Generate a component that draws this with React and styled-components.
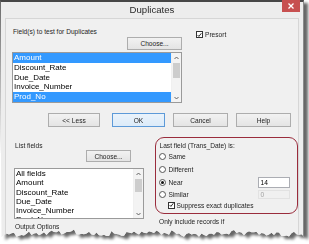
import React from "react";
import styled, { createGlobalStyle, css } from "styled-components";

const GlobalStyle = createGlobalStyle`
  html, body { margin: 0; padding: 0; background: #ffffff; }
  body { width: 309px; height: 244px; overflow: hidden; font-family: "Liberation Sans", Arial, sans-serif; }
  * { box-sizing: border-box; }
`;

const tearPoints = (() => {
  const pts = ["0px 0px", "304px 0px"];
  for (let x = 304; x >= 0; x -= 2.5) {
    const y =
      233.5 +
      1.4 * Math.sin(x * 0.83) +
      1.1 * Math.sin(x * 0.31 + 1.3) +
      1.2 * Math.sin(x * 0.07 + 0.4) +
      (Math.sin(x * 12.9898) * 43758.5453 % 1) * 1.1;
    pts.push(`${x.toFixed(1)}px ${y.toFixed(1)}px`);
  }
  return pts.join(", ");
})();

const Shadow = styled.div`
  width: 309px;
  height: 244px;
  filter: drop-shadow(4px 3px 1.5px rgba(0, 0, 0, 0.6));
`;

const Window = styled.div`
  width: 304px;
  height: 241px;
  background: #ededed;
  border-top: 2px solid #474747;
  border-left: 1px solid #6a6a6a;
  border-right: 1px solid #8a8a8a;
  padding: 0 4px;
  clip-path: polygon(${tearPoints});
  display: flex;
  flex-direction: column;
`;

const TitleBar = styled.div`
  position: relative;
  height: 16px;
  display: flex;
  align-items: center;
  justify-content: center;
  font-size: 9.6px;
  color: #2b2b2b;
  padding-bottom: 1px;
`;

const CloseButton = styled.div`
  position: absolute;
  top: -2px;
  right: -1px;
  width: 18px;
  height: 12px;
  background: #c75050;
  display: flex;
  align-items: center;
  justify-content: center;
`;

const Client = styled.div`
  flex: 1;
  background: #f0f0f0;
  border: 1px solid #d6d6d6;
  display: flex;
  flex-direction: column;
`;

const Label = styled.div`
  font-size: 6.6px;
  line-height: 9px;
  height: 9px;
  color: #1e1e1e;
  white-space: nowrap;
  ${(p) => p.$indent && css`padding-left: ${p.$indent}px;`}
  ${(p) => p.$mt !== undefined && css`margin-top: ${p.$mt}px;`}
  ${(p) => p.$h !== undefined && css`height: ${p.$h}px; line-height: ${p.$h}px;`}
`;

const TopSection = styled.div`
  display: flex;
  padding: 8px 0 0 6px;
`;

const Column = styled.div`
  width: ${(p) => p.$w}px;
  display: flex;
  flex-direction: column;
  ${(p) => p.$ml && css`margin-left: ${p.$ml}px;`}
`;

const Button = styled.div`
  width: ${(p) => p.$w}px;
  height: ${(p) => p.$h || 14}px;
  border: 1px solid ${(p) => (p.$default ? "#5d9ad8" : "#adadad")};
  background: ${(p) => (p.$default ? "linear-gradient(#eaf3fb, #dcebf9)" : "linear-gradient(#f2f2f2, #e4e4e4)")};
  font-size: 6.6px;
  color: #1e1e1e;
  display: flex;
  align-items: center;
  justify-content: center;
  white-space: nowrap;
  ${(p) => p.$alignEnd && css`align-self: flex-end;`}
  ${(p) => p.$mt !== undefined && css`margin-top: ${p.$mt}px;`}
  ${(p) => p.$mr !== undefined && css`margin-right: ${p.$mr}px;`}
`;

const ListBox = styled.div`
  height: 51px;
  margin-top: ${(p) => p.$mt}px;
  background: #ffffff;
  border: 1px solid #9a9a9a;
  display: flex;
  overflow: hidden;
`;

const Items = styled.div`
  flex: 1;
  display: flex;
  flex-direction: column;
  overflow: hidden;
`;

const Item = styled.div`
  height: ${(p) => p.$h}px;
  line-height: ${(p) => p.$h}px;
  flex: none;
  font-size: 8px;
  padding-left: 1px;
  white-space: nowrap;
  color: ${(p) => (p.$sel ? "#ffffff" : "#000000")};
  background: ${(p) => (p.$sel ? "#3399ff" : "transparent")};
`;

const ScrollBar = styled.div`
  width: 10px;
  background: #f3f3f3;
  border-left: 1px solid #f0f0f0;
  display: flex;
  flex-direction: column;
`;

const Arrow = styled.div`
  height: 9px;
  display: flex;
  align-items: center;
  justify-content: center;
`;

const Track = styled.div`
  flex: 1;
  padding: 1px 1px 0;
`;

const Thumb = styled.div`
  height: ${(p) => p.$h}px;
  background: #cdcdcd;
`;

const CheckRow = styled.div`
  display: flex;
  align-items: center;
  gap: 2px;
  font-size: 6.6px;
  color: #1e1e1e;
  white-space: nowrap;
  ${(p) => p.$ml && css`margin-left: ${p.$ml}px;`}
  ${(p) => p.$mt && css`margin-top: ${p.$mt}px;`}
  ${(p) => p.$h && css`height: ${p.$h}px;`}
  align-self: flex-start;
`;

const CheckBox = styled.div`
  width: 7px;
  height: 7px;
  border: 1px solid #333333;
  background: #ffffff;
  display: flex;
  align-items: center;
  justify-content: center;
`;

const ButtonRow = styled.div`
  display: flex;
  margin-top: 10px;
  padding-left: 42px;
`;

const Gap = styled.div`
  width: ${(p) => p.$w}px;
  flex: none;
`;

const BottomSection = styled.div`
  display: flex;
  margin-top: 10px;
  padding-left: 8px;
`;

const RedGroup = styled.div`
  height: 77px;
  border: 1.5px solid #9a2c3c;
  border-radius: 9px;
  padding: 3.5px 7.5px 0 2.5px;
  display: flex;
  flex-direction: column;
`;

const OptionRow = styled.div`
  height: ${(p) => p.$h}px;
  display: flex;
  align-items: center;
  font-size: 6.6px;
  color: #1e1e1e;
`;

const Radio = styled.div`
  width: 7px;
  height: 7px;
  border-radius: 50%;
  border: 1px solid #555555;
  background: #ffffff;
  display: flex;
  align-items: center;
  justify-content: center;
  margin-right: 3px;
  &::after {
    content: "";
    width: 3px;
    height: 3px;
    border-radius: 50%;
    background: ${(p) => (p.$on ? "#111111" : "transparent")};
  }
`;

const TextBox = styled.div`
  margin-left: auto;
  width: 32px;
  height: ${(p) => p.$h}px;
  border: 1px solid ${(p) => (p.$disabled ? "#e2e2e2" : "#abadb3")};
  background: ${(p) => (p.$disabled ? "#f0f0f0" : "#ffffff")};
  color: ${(p) => (p.$disabled ? "#a0a0a0" : "#000000")};
  font-size: 6.6px;
  display: flex;
  align-items: center;
  padding-left: 2px;
`;

const Check = () => (
  <svg width="6" height="6" viewBox="0 0 6 6">
    <path d="M0.8 3.1 L2.3 4.7 L5.2 0.9" fill="none" stroke="#111" strokeWidth="1.1" />
  </svg>
);

const Chevron = ({ up }) => (
  <svg width="5" height="4" viewBox="0 0 5 4">
    <path d={up ? "M0.5 3 L2.5 1 L4.5 3" : "M0.5 1 L2.5 3 L4.5 1"} fill="none" stroke="#555" strokeWidth="0.9" />
  </svg>
);

const List = ({ items, selected = [], h, thumb, mt }) => (
  <ListBox $mt={mt}>
    <Items>
      {items.map((t) => (
        <Item key={t} $h={h} $sel={selected.includes(t)}>
          {t}
        </Item>
      ))}
    </Items>
    <ScrollBar>
      <Arrow>
        <Chevron up />
      </Arrow>
      <Track>
        <Thumb $h={thumb} />
      </Track>
      <Arrow>
        <Chevron />
      </Arrow>
    </ScrollBar>
  </ListBox>
);

export default function App() {
  return (
    <>
      <GlobalStyle />
      <Shadow>
        <Window>
          <TitleBar>
            Duplicates
            <CloseButton>
              <svg width="6" height="6" viewBox="0 0 6 6">
                <path d="M0.5 0.5 L5.5 5.5 M5.5 0.5 L0.5 5.5" stroke="#fff" strokeWidth="1.3" />
              </svg>
            </CloseButton>
          </TitleBar>
          <Client>
            <TopSection>
              <Column $w={170}>
                <Label $indent={1}>Field(s) to test for Duplicates</Label>
                <Button $w={55} $h={13} $alignEnd $mt={1}>
                  Choose...
                </Button>
                <List
                  mt={2}
                  h={9.8}
                  thumb={15}
                  items={["Amount", "Discount_Rate", "Due_Date", "Invoice_Number", "Prod_No"]}
                  selected={["Amount", "Prod_No"]}
                />
              </Column>
              <CheckRow $ml={14} $mt={4}>
                <CheckBox>
                  <Check />
                </CheckBox>
                Presort
              </CheckRow>
            </TopSection>
            <ButtonRow>
              <Button $w={52}>&lt;&lt; Less</Button>
              <Gap $w={12} />
              <Button $w={53} $default>
                OK
              </Button>
              <Gap $w={8} />
              <Button $w={55}>Cancel</Button>
              <Gap $w={8} />
              <Button $w={55}>Help</Button>
            </ButtonRow>
            <BottomSection>
              <Column $w={130}>
                <Label $indent={1} $mt={4}>
                  List fields
                </Label>
                <Button $w={45} $h={12} $alignEnd $mr={13}>
                  Choose...
                </Button>
                <List
                  mt={6}
                  h={9.3}
                  thumb={13}
                  items={["All fields", "Amount", "Discount_Rate", "Due_Date", "Invoice_Number", "Prod_No"]}
                />
                <Label $indent={1} $mt={3}>
                  Output Options
                </Label>
              </Column>
              <Column $w={143} $ml={11}>
                <RedGroup>
                  <Label $indent={1} $h={8.5}>
                    Last field (Trans_Date) is:
                  </Label>
                  <OptionRow $h={13}>
                    <Radio />
                    Same
                  </OptionRow>
                  <OptionRow $h={13}>
                    <Radio />
                    Different
                  </OptionRow>
                  <OptionRow $h={13}>
                    <Radio $on />
                    Near
                    <TextBox $h={11}>14</TextBox>
                  </OptionRow>
                  <OptionRow $h={10}>
                    <Radio />
                    Similar
                    <TextBox $h={9} $disabled>
                      0
                    </TextBox>
                  </OptionRow>
                  <CheckRow $ml={9} $h={12}>
                    <CheckBox>
                      <Check />
                    </CheckBox>
                    Suppress exact duplicates
                  </CheckRow>
                </RedGroup>
                <Label $indent={4} $mt={3}>
                  Only include records if
                </Label>
              </Column>
            </BottomSection>
          </Client>
        </Window>
      </Shadow>
    </>
  );
}
